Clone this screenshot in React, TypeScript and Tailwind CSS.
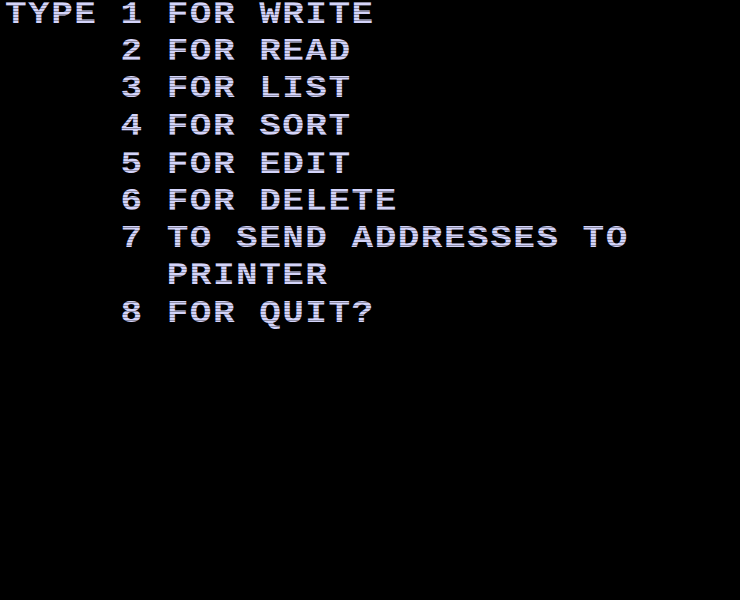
import React from 'react';

// menu shown by the address book program
const MENU_LINES = [
  'TYPE 1 FOR WRITE',
  '     2 FOR READ',
  '     3 FOR LIST',
  '     4 FOR SORT',
  '     5 FOR EDIT',
  '     6 FOR DELETE',
  '     7 TO SEND ADDRESSES TO',
  '       PRINTER',
  '     8 FOR QUIT?',
];

export default function App() {
  return (
    <div className="relative w-full h-[600px] bg-black overflow-hidden">
      {/* wide, squat glyphs like the 32-column text mode */}
      <div
        className="mt-[-4px] pl-[5px] origin-top scale-y-[0.887] text-[36px] leading-[42.2px] tracking-[1.5px] font-bold text-[#d4d4fa] whitespace-pre"
        style={{ fontFamily: '"Liberation Mono", "DejaVu Sans Mono", monospace' }}
      >
        {MENU_LINES.map((line, i) => (
          <div key={i}>{line}</div>
        ))}
      </div>
      {/* crt scanlines */}
      <div className="pointer-events-none absolute inset-0 bg-[repeating-linear-gradient(to_bottom,transparent_0px,transparent_2px,rgba(0,0,0,0.35)_2px,rgba(0,0,0,0.35)_3px)]" />
    </div>
  );
}
